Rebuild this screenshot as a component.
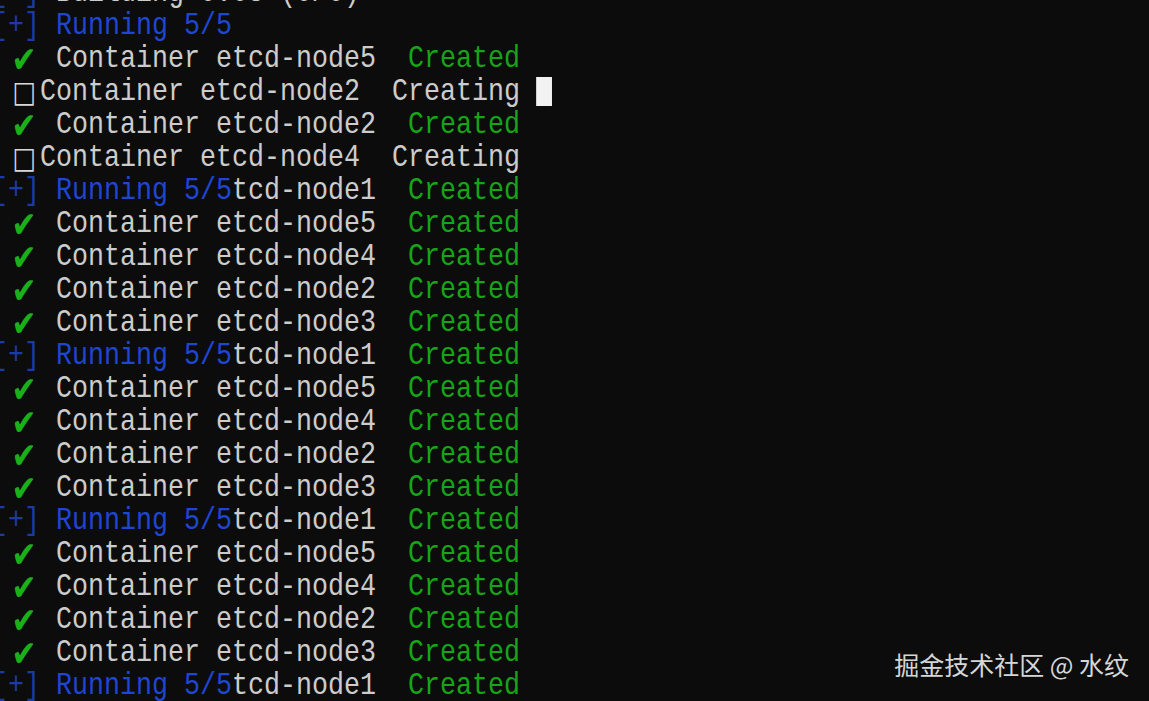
import React from 'react'

type Seg = { t: string; c?: 'blue' | 'dim' | 'white' | 'green' | 'check' | 'box' | 'cursor' }

const BLUE  = 'text-[#1f46d2]'
const DIM   = 'text-[#1c3aa6]'
const WHITE = 'text-[#cccccc]'
const GREEN = 'text-[#16a516]'

const running: Seg[] = [{ t: '[+]', c: 'dim' }, { t: ' ' }, { t: 'Running 5/5', c: 'blue' }]

const done = (n: number): Seg[] => [
  { t: ' ' },
  { t: '✔', c: 'check' },
  { t: ' Container etcd-node' + n + '  ' },
  { t: 'Created', c: 'green' },
]

const creating = (n: number, cursor = false): Seg[] => [
  { t: ' ' },
  { t: '□', c: 'box' },
  { t: 'Container etcd-node' + n + '  Creating' + (cursor ? ' ' : '') },
  ...(cursor ? [{ t: '', c: 'cursor' } as Seg] : []),
]

const overwritten: Seg[] = [...running, { t: 'tcd-node1  ' }, { t: 'Created', c: 'green' }]

const LINES: Seg[][] = [
  [{ t: '[+]', c: 'dim' }, { t: ' Building 0.0s (0/0)' }],
  running,
  done(5),
  creating(2, true),
  done(2),
  creating(4),
  overwritten,
  done(5), done(4), done(2), done(3),
  overwritten,
  done(5), done(4), done(2), done(3),
  overwritten,
  done(5), done(4), done(2), done(3),
  overwritten,
]

function Segment({ s }: { s: Seg }) {
  if (s.c === 'check')
    return (
      <span className="inline-block w-[38.4px] h-[33px] leading-[35px] align-top text-center text-[#19b019] font-['DejaVu_Sans'] text-[36px]">
        ✔
      </span>
    )
  if (s.c === 'box')
    return (
      <span className="inline-block w-[38.4px] h-[33px] leading-[33px] align-top text-center text-[#d8d8d8] font-['DejaVu_Sans'] text-[30px]">
        □
      </span>
    )
  if (s.c === 'cursor')
    return <span className="inline-block w-[19.2px] h-[29px] bg-[#f2f2f2] align-[-6px]" />
  const color = s.c === 'blue' ? BLUE : s.c === 'dim' ? DIM : s.c === 'green' ? GREEN : WHITE
  return <span className={color}>{s.t}</span>
}

export default function App() {
  return (
    <div className="relative w-[1149px] h-[701px] overflow-hidden bg-[#0c0c0c]">
      <div className="-mt-[24px] -ml-[8px] font-['Liberation_Mono',monospace] text-[32px]">
        {LINES.map((line, i) => (
          <div
            key={i}
            className="h-[33px] leading-[33px] whitespace-pre origin-left scale-x-[0.8333]"
          >
            {line.map((s, j) => (
              <Segment key={j} s={s} />
            ))}
          </div>
        ))}
      </div>

      {/* watermark */}
      <div className="absolute right-[20px] top-[647px] text-[25px] leading-[34px] text-[#d6d6d6] font-['Noto_Sans_CJK_SC',sans-serif]">
        掘金技术社区 @ 水纹
      </div>
    </div>
  )
}
